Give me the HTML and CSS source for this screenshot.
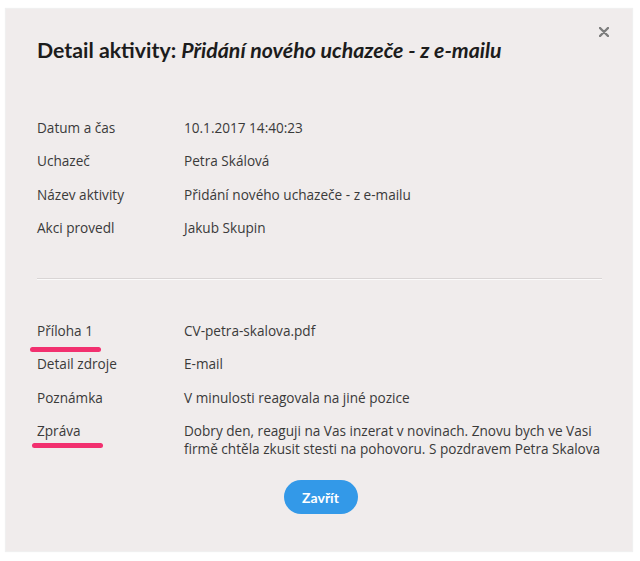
FILE: index.html
```html
<!DOCTYPE html>
<html lang="cs">
<head>
<meta charset="utf-8">
<title>Detail aktivity</title>
<link rel="stylesheet" href="styles.css">
</head>
<body>
<div class="modal">
  <button class="close" aria-label="Zavřít"><svg width="10" height="10" viewBox="0 0 10 10"><path d="M1 1L9 9M9 1L1 9" stroke="#7d7d7d" stroke-width="2.4" stroke-linecap="round"/></svg></button>
  <h1 class="title">Detail aktivity: <em>Přidání nového uchazeče - z e-mailu</em></h1>
  <div class="group first">
    <div class="row"><div class="label">Datum a čas</div><div class="value">10.1.2017 14:40:23</div></div>
    <div class="row"><div class="label">Uchazeč</div><div class="value">Petra Skálová</div></div>
    <div class="row"><div class="label">Název aktivity</div><div class="value">Přidání nového uchazeče - z e-mailu</div></div>
    <div class="row"><div class="label">Akci provedl</div><div class="value">Jakub Skupin</div></div>
  </div>
  <hr class="divider">
  <div class="group">
    <div class="row"><div class="label"><span class="mark">Příloha 1</span></div><div class="value">CV-petra-skalova.pdf</div></div>
    <div class="row"><div class="label">Detail zdroje</div><div class="value">E-mail</div></div>
    <div class="row"><div class="label">Poznámka</div><div class="value">V minulosti reagovala na jiné pozice</div></div>
    <div class="row"><div class="label"><span class="mark mark2">Zpráva</span></div><div class="value">Dobry den, reaguji na Vas inzerat v novinach. Znovu bych ve Vasi firmě chtěla zkusit stesti na pohovoru. S pozdravem Petra Skalova</div></div>
  </div>
  <div class="actions"><button class="btn">Zavřít</button></div>
</div>
</body>
</html>
```
FILE: styles.css
```css
html, body { margin: 0; padding: 0; background: #ffffff; }
body { width: 640px; height: 561px; overflow: hidden; }
.modal {
  position: relative;
  box-sizing: border-box;
  margin: 9px 0 0 6px;
  width: 626px;
  height: 542px;
  background: #f0ecec;
  box-shadow: 0 0 1px 1px rgba(0,0,0,0.06);
  padding: 28px 30px 0 31px;
  font-family: "Open Sans", "Noto Sans", sans-serif;
  color: #333;
}
.close {
  position: absolute;
  top: 18px;
  right: 23px;
  border: 0;
  background: transparent;
  padding: 0;
  width: 10px;
  height: 10px;
  line-height: 0;
}
.title {
  margin: 0;
  font-family: Lato, "Noto Sans", sans-serif;
  font-weight: 700;
  font-size: 21.3px;
  line-height: 26px;
  color: #1c1c1c;
}
.title em { font-style: italic; }
.group.first { margin-top: 48px; }
.row { display: flex; padding: 7.75px 0; font-size: 13.6px; line-height: 18px; }
.label { width: 147px; flex: none; color: #3a3a3a; }
.value { flex: 1; color: #3a3a3a; }
.divider {
  margin: 33px 0 34px 0;
  border: 0;
  height: 1px;
  background: #d9d5d5;
  border-bottom: 1px solid #fbfafa;
}
.mark { position: relative; display: inline-block; }
.mark::after {
  content: "";
  position: absolute;
  left: -7px;
  width: 71px;
  top: 25px;
  height: 5px;
  border-radius: 3px;
  background: #f2306f;
}
.mark2::after { left: -5px; top: 21px; }
.actions { display: flex; justify-content: center; margin-top: 14px; }
.btn {
  width: 74px;
  height: 34px;
  border: 0;
  border-radius: 17px;
  background: #3399e8;
  color: #fff;
  font-family: Lato, "Noto Sans", sans-serif;
  font-weight: 700;
  font-size: 14px;
  margin-left: 2px;
}
```
